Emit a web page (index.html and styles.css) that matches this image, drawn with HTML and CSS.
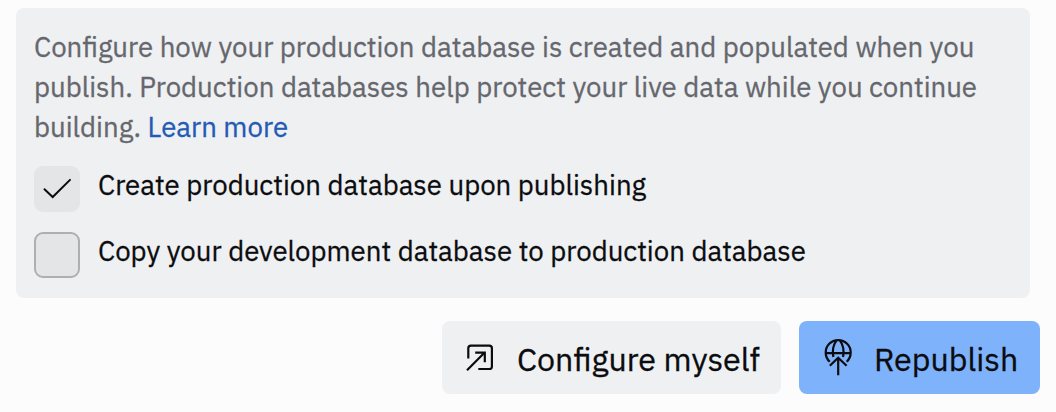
FILE: index.html
```html
<!DOCTYPE html>
<html lang="en">
<head>
<meta charset="utf-8">
<title>Publish</title>
<link rel="stylesheet" href="styles.css">
</head>
<body>
<main class="page">
  <section class="panel">
    <p class="description">
      <span class="line">Configure how your production database is created and populated when you</span>
      <span class="line">publish. Production databases help protect your live data while you continue</span>
      <span class="line">building. <a class="link">Learn more</a></span>
    </p>
    <div class="option">
      <span class="checkbox checkbox-checked">
        <svg class="check" viewBox="0 0 46 46"><path d="M10.5 23.3 18.7 31 36 13.9"/></svg>
      </span>
      <span class="label">Create production database upon publishing</span>
    </div>
    <div class="option">
      <span class="checkbox"></span>
      <span class="label">Copy your development database to production database</span>
    </div>
  </section>
  <div class="actions">
    <button class="button button-configure">
      <svg class="icon" viewBox="0 0 36 36"><path d="M6.3 18.5V8.2a2.6 2.6 0 0 1 2.6-2.6h18.4a2.6 2.6 0 0 1 2.6 2.6v18.2a2.6 2.6 0 0 1-2.6 2.6H16.3M5 30.2 22.4 12.8M13.2 12.6h9.6v9.6"/></svg>
      <span class="button-text">Configure myself</span>
    </button>
    <button class="button button-republish">
      <svg class="icon" viewBox="0 0 36 36"><path d="M10.7 21.7a12.5 12.5 0 1 1 17 0M6.7 13.2h25M14.4 17C12.8 11 14.5 4 17.4.8M21 .8C23.9 4 25.6 11 24 17M19.2 35.3V17.8M10.8 25.8l8.4-8 8.4 8"/></svg>
      <span class="button-text">Republish</span>
    </button>
  </div>
</main>
</body>
</html>
```
FILE: styles.css
```css
* { box-sizing: border-box; }

body {
  margin: 0;
  background: #fcfcfc;
  color: #0b0c0f;
  font-family: "IBM Plex Sans", "Open Sans", sans-serif;
  -webkit-text-stroke: 0.3px currentColor;
}

.page {
  width: 1056px;
  height: 412px;
  padding: 8px 16px;
  overflow: hidden;
}

.panel {
  width: 1014px;
  height: 290px;
  padding: 19px 18px;
  border-radius: 8px;
  background: #eff0f2;
}

.description {
  margin: 0 0 19px;
  color: #65676d;
  font-size: 27.6px;
  line-height: 40px;
}

.line { display: block; white-space: nowrap; }
.link { color: #2459b5; }

.option {
  display: flex;
  gap: 18px;
  height: 46px;
  margin-bottom: 20px;
}

.checkbox {
  flex: none;
  width: 46px;
  height: 46px;
  border: 2px solid #adafb1;
  border-radius: 9px;
  background: #e4e5e7;
}

.checkbox-checked { border: 0; }

.check {
  display: block;
  width: 46px;
  height: 46px;
  fill: none;
  stroke: #0b0c0f;
  stroke-width: 2;
  stroke-linecap: round;
}

.label {
  font-size: 27.6px;
  line-height: 38px;
  white-space: nowrap;
}

.actions {
  display: flex;
  justify-content: flex-end;
  gap: 18px;
  margin-top: 23px;
}

.button {
  display: flex;
  height: 73px;
  padding: 19px 0 0 20px;
  border: 0;
  border-radius: 8px;
  color: inherit;
  font: 32.2px/38px "IBM Plex Sans", "Open Sans", sans-serif;
  white-space: nowrap;
}
.button-configure { width: 339px; background: #eff0f2; }
.button-republish { width: 241px; background: #7eb2fa; }

.icon {
  flex: none;
  width: 36px;
  height: 36px;
  margin-right: 19px;
  overflow: visible;
  fill: none;
  stroke: #0b0c0f;
  stroke-width: 2.2;
}
```
